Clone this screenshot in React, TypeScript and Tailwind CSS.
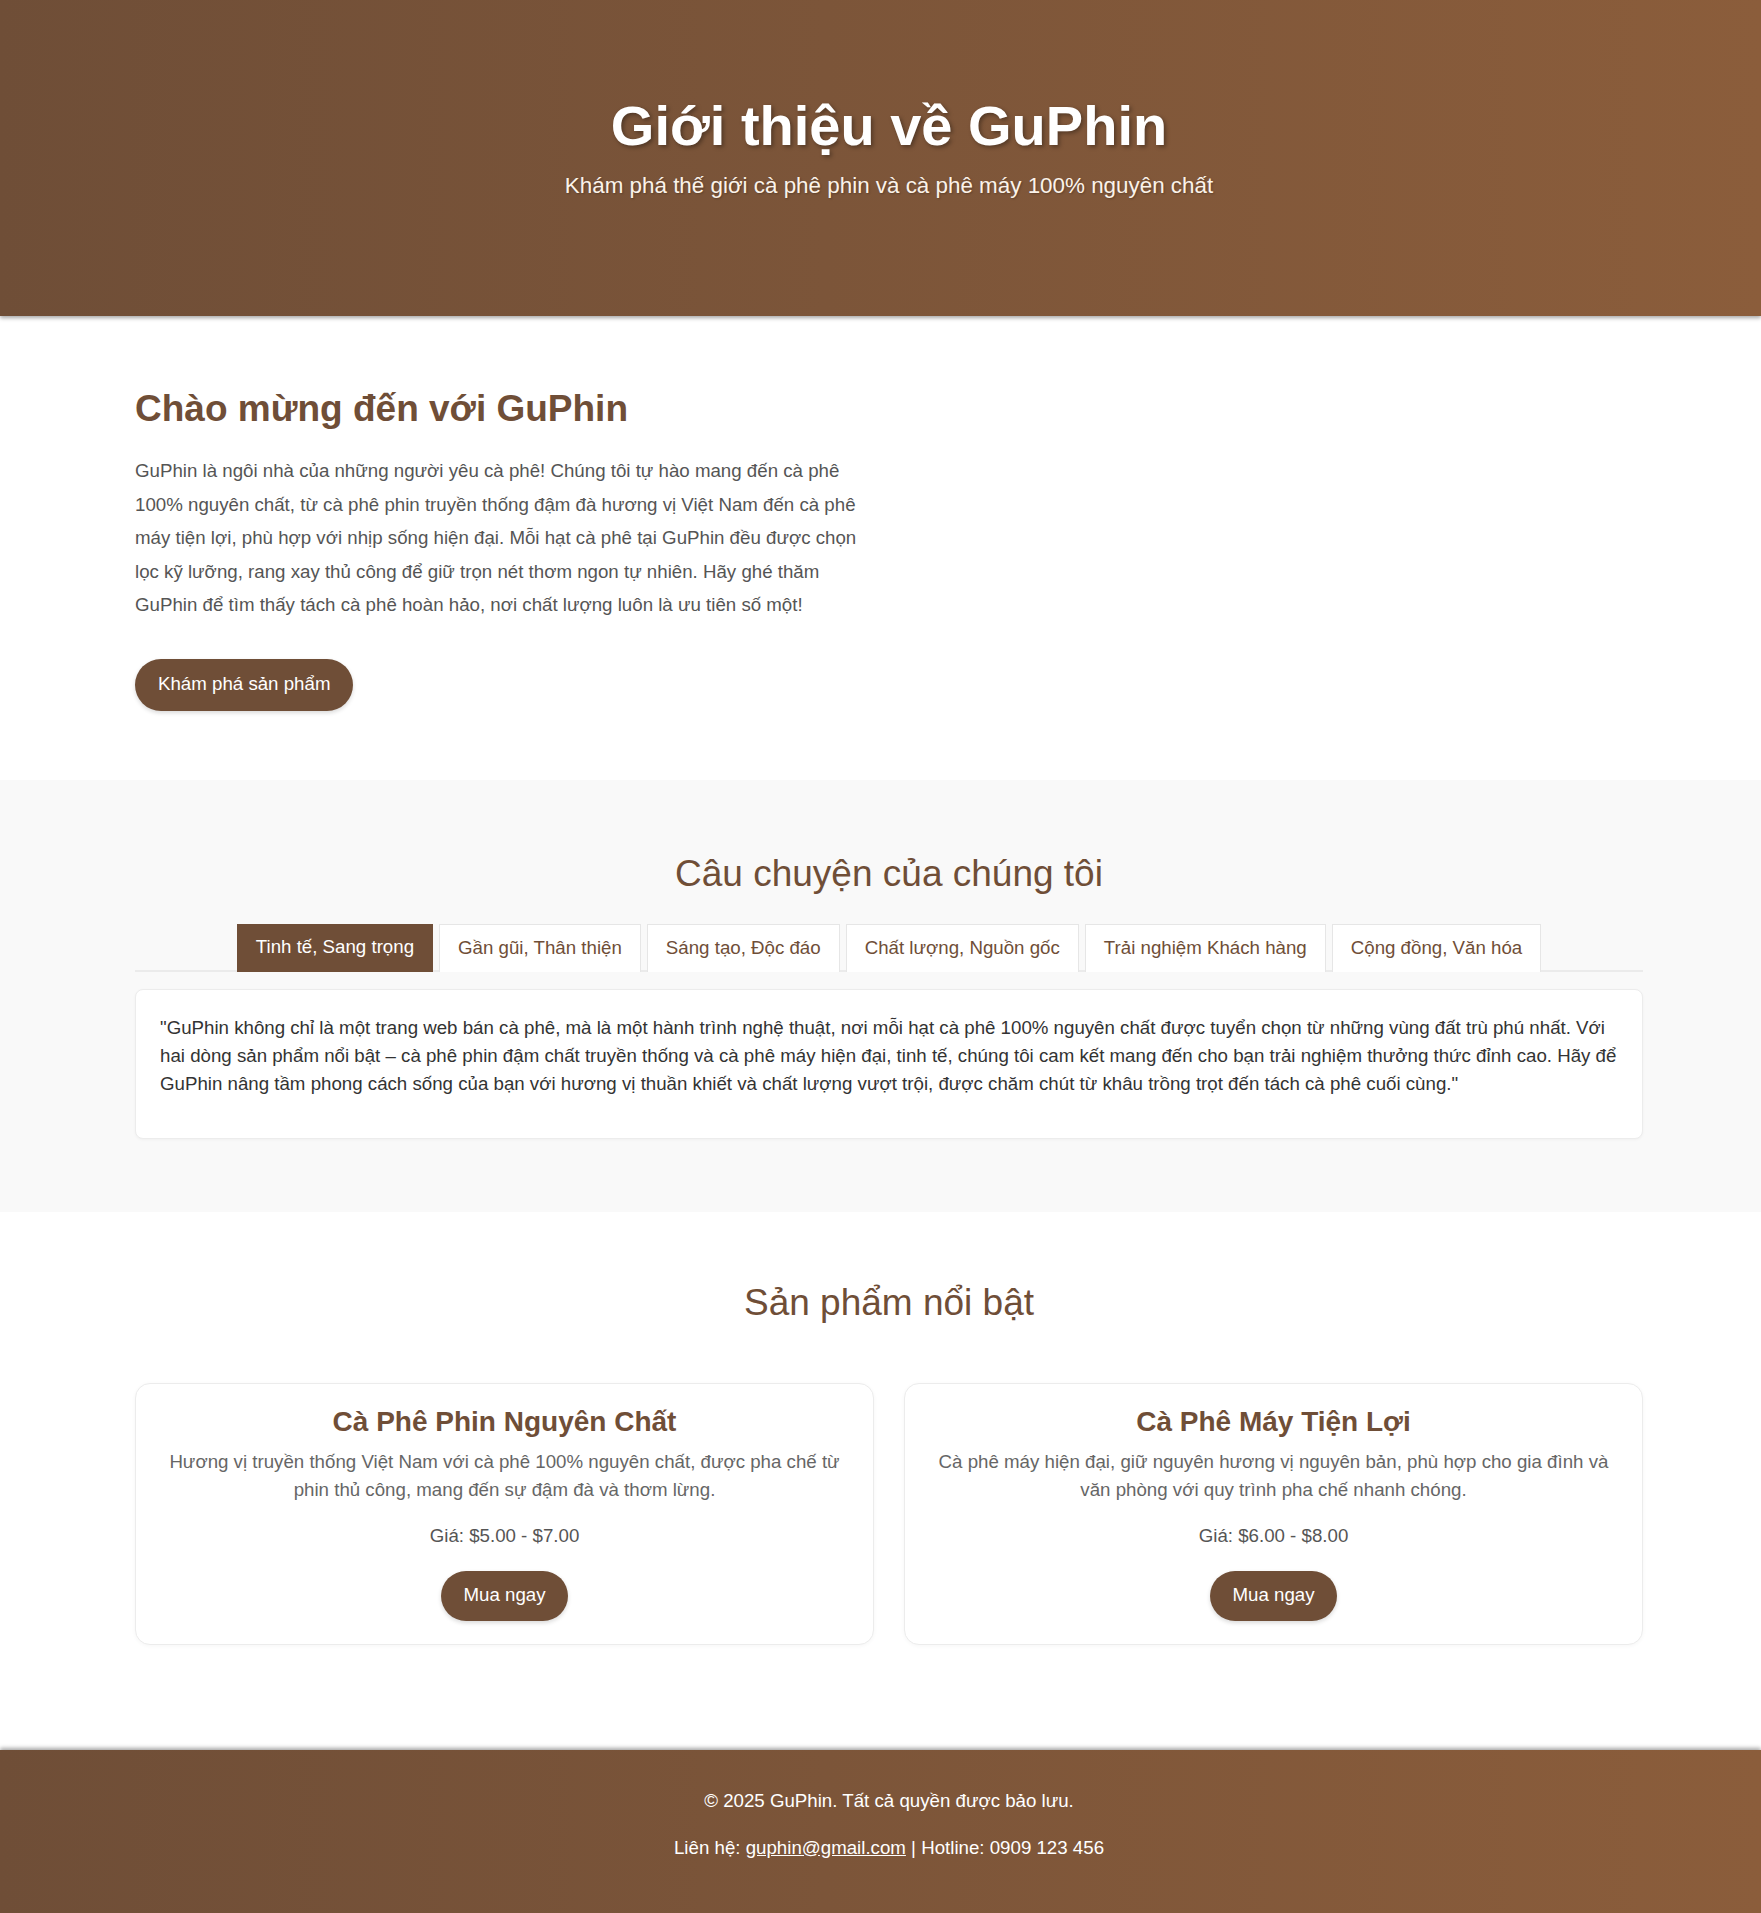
import React, { useState } from 'react';

const tabs = [
  'Tinh tế, Sang trọng',
  'Gần gũi, Thân thiện',
  'Sáng tạo, Độc đáo',
  'Chất lượng, Nguồn gốc',
  'Trải nghiệm Khách hàng',
  'Cộng đồng, Văn hóa',
];

const stories = [
  '"GuPhin không chỉ là một trang web bán cà phê, mà là một hành trình nghệ thuật, nơi mỗi hạt cà phê 100% nguyên chất được tuyển chọn từ những vùng đất trù phú nhất. Với hai dòng sản phẩm nổi bật – cà phê phin đậm chất truyền thống và cà phê máy hiện đại, tinh tế, chúng tôi cam kết mang đến cho bạn trải nghiệm thưởng thức đỉnh cao. Hãy để GuPhin nâng tầm phong cách sống của bạn với hương vị thuần khiết và chất lượng vượt trội, được chăm chút từ khâu trồng trọt đến tách cà phê cuối cùng."',
  '"Tại GuPhin, mỗi tách cà phê là một lời chào thân thương. Chúng tôi mong bạn tìm thấy ở đây cảm giác ấm áp như ngồi bên góc quán quen mỗi sáng."',
  '"Chúng tôi không ngừng tìm tòi những cách pha chế mới, kết hợp tinh hoa cà phê Việt với phong cách hiện đại để mang đến trải nghiệm độc đáo."',
  '"Hạt cà phê được tuyển chọn từ những vùng trồng nổi tiếng, rang xay thủ công và kiểm soát chất lượng nghiêm ngặt ở từng công đoạn."',
  '"Sự hài lòng của khách hàng là ưu tiên hàng đầu. GuPhin luôn lắng nghe và đồng hành cùng bạn trên hành trình thưởng thức cà phê."',
  '"GuPhin tự hào góp phần gìn giữ và lan tỏa văn hóa cà phê Việt Nam, kết nối những người cùng chung niềm đam mê."',
];

const products = [
  {
    name: 'Cà Phê Phin Nguyên Chất',
    desc: 'Hương vị truyền thống Việt Nam với cà phê 100% nguyên chất, được pha chế từ phin thủ công, mang đến sự đậm đà và thơm lừng.',
    price: 'Giá: $5.00 - $7.00',
  },
  {
    name: 'Cà Phê Máy Tiện Lợi',
    desc: 'Cà phê máy hiện đại, giữ nguyên hương vị nguyên bản, phù hợp cho gia đình và văn phòng với quy trình pha chế nhanh chóng.',
    price: 'Giá: $6.00 - $8.00',
  },
];

const App: React.FC = () => {
  const [active, setActive] = useState(0);

  return (
    <div className="font-['Liberation_Sans',Arial,sans-serif] bg-white">
      {/* Hero */}
      <header className="relative z-10 h-[316px] bg-gradient-to-r from-[#6f4e37] to-[#8b5d3b] shadow-[0_2px_4px_rgba(0,0,0,0.35)] pl-[17px] pt-[92px] text-center text-white">
        <h1 className="text-[56px] leading-[67px] font-bold [text-shadow:2px_2px_4px_rgba(0,0,0,0.35)]">
          Giới thiệu về GuPhin
        </h1>
        <p className="mt-[13px] text-[22.4px] leading-[27px] text-[#fbf3ea] [text-shadow:1px_1px_2px_rgba(0,0,0,0.25)]">
          Khám phá thế giới cà phê phin và cà phê máy 100% nguyên chất
        </p>
      </header>

      {/* Welcome */}
      <section className="pl-[17px] pt-[71px] pb-[69px]">
        <div className="mx-auto w-[1508px] grid grid-cols-2 gap-10">
          <div>
            <h2 className="text-[37px] leading-[44px] font-bold text-[#6f4e37]">Chào mừng đến với GuPhin</h2>
            <p className="mt-[23px] text-[18.7px] leading-[33.5px] text-[#555]">
              GuPhin là ngôi nhà của những người yêu cà phê! Chúng tôi tự hào mang đến cà phê 100% nguyên chất, từ cà phê phin truyền thống đậm đà hương vị Việt Nam đến cà phê máy tiện lợi, phù hợp với nhịp sống hiện đại. Mỗi hạt cà phê tại GuPhin đều được chọn lọc kỹ lưỡng, rang xay thủ công để giữ trọn nét thơm ngon tự nhiên. Hãy ghé thăm GuPhin để tìm thấy tách cà phê hoàn hảo, nơi chất lượng luôn là ưu tiên số một!
            </p>
            <button className="mt-[37px] h-[52px] px-[23px] rounded-full bg-[#6f4e37] text-white text-[18.7px] shadow-[0_2px_4px_rgba(0,0,0,0.15)]">
              Khám phá sản phẩm
            </button>
          </div>
          <div />
        </div>
      </section>

      {/* Story */}
      <section className="bg-[#f9f9f9] pl-[17px] pt-[72px] pb-[73px]">
        <div className="mx-auto w-[1508px]">
          <h2 className="text-center text-[37px] leading-[44px] text-[#6f4e37]">Câu chuyện của chúng tôi</h2>
          <div className="mt-[28px] flex justify-center gap-[6px] border-b-2 border-[#ebebeb]">
            {tabs.map((t, i) => (
              <button
                key={t}
                onClick={() => setActive(i)}
                className={
                  i === active
                    ? 'h-[48px] -mb-[2px] px-[18px] bg-[#6f4e37] text-white text-[18.7px] border border-[#6f4e37]'
                    : 'h-[48px] -mb-[2px] px-[18px] bg-white text-[#6f4e37] text-[18.7px] border border-[#e6e6e6] border-b-0'
                }
              >
                {t}
              </button>
            ))}
          </div>
          <div className="mt-[17px] rounded-lg border border-[#ececec] bg-white px-[24px] pt-[24px] pb-[24px] shadow-[0_1px_3px_rgba(0,0,0,0.04)]">
            <p className="mb-4 text-[18.7px] leading-[28px] text-[#333]">{stories[active]}</p>
          </div>
        </div>
      </section>

      {/* Products */}
      <section className="pl-[17px] pt-[69px] pb-[105px]">
        <div className="mx-auto w-[1508px]">
          <h2 className="text-center text-[37px] leading-[44px] text-[#6f4e37]">Sản phẩm nổi bật</h2>
          <div className="mt-[58px] grid grid-cols-2 gap-[30px]">
            {products.map((p) => (
              <div
                key={p.name}
                className="rounded-[15px] border border-[#ececec] bg-white px-[30px] pt-[21px] pb-[23px] text-center shadow-[0_1px_4px_rgba(0,0,0,0.04)]"
              >
                <h3 className="text-[28px] leading-[34px] font-bold text-[#6f4e37]">{p.name}</h3>
                <p className="mt-[9px] text-[18.7px] leading-[28px] text-[#666]">{p.desc}</p>
                <p className="mt-[18.5px] text-[18.7px] leading-[28px] text-[#555]">{p.price}</p>
                <button className="mt-[20.5px] h-[50px] px-[22px] rounded-full bg-[#6f4e37] text-white text-[18.7px] shadow-[0_2px_4px_rgba(0,0,0,0.15)]">
                  Mua ngay
                </button>
              </div>
            ))}
          </div>
        </div>
      </section>

      {/* Footer */}
      <footer className="relative h-[163px] bg-gradient-to-r from-[#6f4e37] to-[#8b5d3b] shadow-[0_-2px_4px_rgba(0,0,0,0.35)] pl-[17px] pt-[37px] text-center text-white text-[18.7px] leading-[28px]">
        <p>© 2025 GuPhin. Tất cả quyền được bảo lưu.</p>
        <p className="mt-[19px]">
          Liên hệ: <a href="#" className="underline">guphin@gmail.com</a> | Hotline: 0909 123 456
        </p>
      </footer>
    </div>
  );
};

export default App;
